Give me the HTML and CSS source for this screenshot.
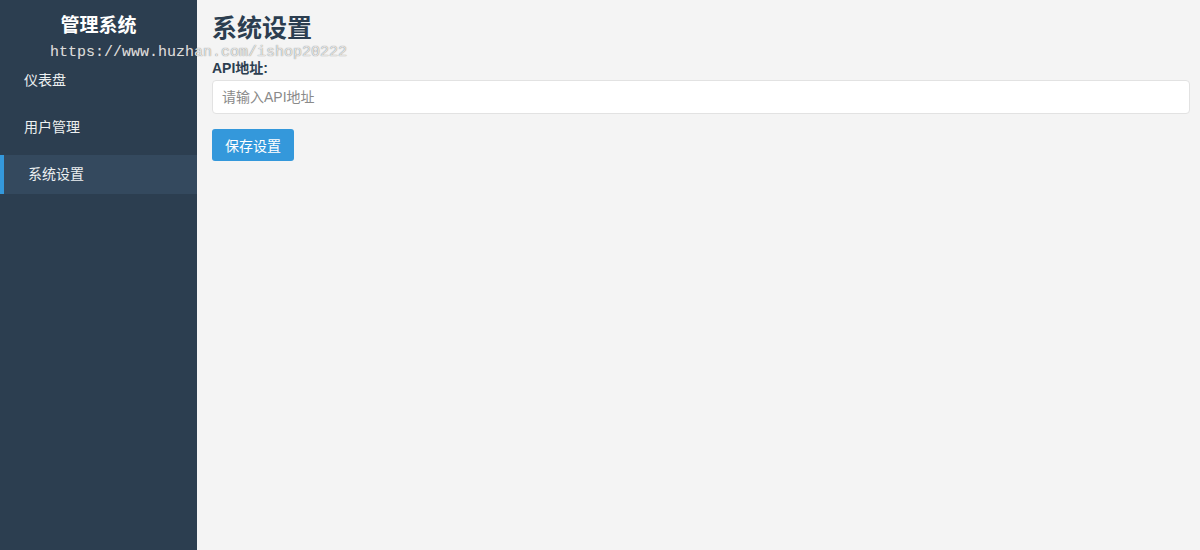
FILE: index.html
```html
<!DOCTYPE html>
<html lang="zh-CN">
<head>
<meta charset="utf-8">
<title>管理系统</title>
<link rel="stylesheet" href="styles.css">
</head>
<body>
<div class="layout">
  <aside class="sidebar">
    <h3 class="brand">管理系统</h3>
    <ul class="menu">
      <li class="menu-item">仪表盘</li>
      <li class="menu-item">用户管理</li>
      <li class="menu-item active">系统设置</li>
    </ul>
  </aside>
  <main class="main">
    <h2 class="page-title">系统设置</h2>
    <form class="form">
      <label class="form-label" for="api">API地址:</label>
      <input class="form-input" id="api" type="text" placeholder="请输入API地址">
      <div class="form-actions">
        <button class="btn-primary" type="button">保存设置</button>
      </div>
    </form>
  </main>
</div>
<div class="watermark">https://www.huzhan.com/ishop20222</div>
</body>
</html>
```

FILE: styles.css
```css
* { box-sizing: border-box; }
html, body {
  margin: 0;
  padding: 0;
  height: 100%;
}
body {
  font-family: "Liberation Sans", "Noto Sans CJK SC", sans-serif;
  background: #f4f4f4;
  color: #2c3e50;
  position: relative;
}
.layout {
  display: flex;
  height: 100%;
}
.sidebar {
  width: 197px;
  flex: none;
  background: #2c3e50;
  color: #ecf0f1;
  padding-top: 12px;
}
.brand {
  margin: 0;
  font-size: 19px;
  line-height: 28px;
  font-weight: bold;
  text-align: center;
  color: #ffffff;
}
.menu {
  list-style: none;
  margin: 21px 0 0;
  padding: 0;
  display: flex;
  flex-direction: column;
  gap: 8px;
}
.menu-item {
  height: 39px;
  line-height: 39px;
  padding-left: 24px;
  font-size: 14px;
  color: #ecf0f1;
}
.menu-item.active {
  background: #34495e;
  border-left: 4px solid #3498db;
}
.main {
  flex: 1;
  padding: 10px 10px 10px 15px;
}
.page-title {
  margin: 0;
  font-size: 25px;
  line-height: 36px;
  font-weight: bold;
  color: #2c3e50;
}
.form {
  margin-top: 14px;
  display: flex;
  flex-direction: column;
}
.form-label {
  display: block;
  font-size: 14px;
  line-height: 16px;
  font-weight: bold;
  color: #2c3e50;
}
.form-input {
  margin-top: 4px;
  width: 100%;
  height: 34px;
  border: 1px solid #e2e2e2;
  border-radius: 4px;
  background: #ffffff;
  padding: 0 9px;
  font-family: "Liberation Sans", "Noto Sans CJK SC", sans-serif;
  font-size: 14px;
  color: #333;
  outline: none;
}
.form-input::placeholder {
  color: #8a8a8a;
}
.form-actions {
  margin-top: 15px;
}
.btn-primary {
  height: 32px;
  width: 82px;
  padding: 0;
  border: none;
  border-radius: 3px;
  background: #3498db;
  color: #ffffff;
  font-family: "Liberation Sans", "Noto Sans CJK SC", sans-serif;
  font-size: 14px;
  cursor: pointer;
}
.watermark {
  position: absolute;
  left: 50px;
  top: 43px;
  font-family: "Liberation Mono", monospace;
  font-size: 15px;
  line-height: 20px;
  color: rgba(240, 240, 240, 0.9);
  text-shadow: 0 0 1px rgba(90, 90, 90, 0.9);
  pointer-events: none;
  white-space: nowrap;
}
```
